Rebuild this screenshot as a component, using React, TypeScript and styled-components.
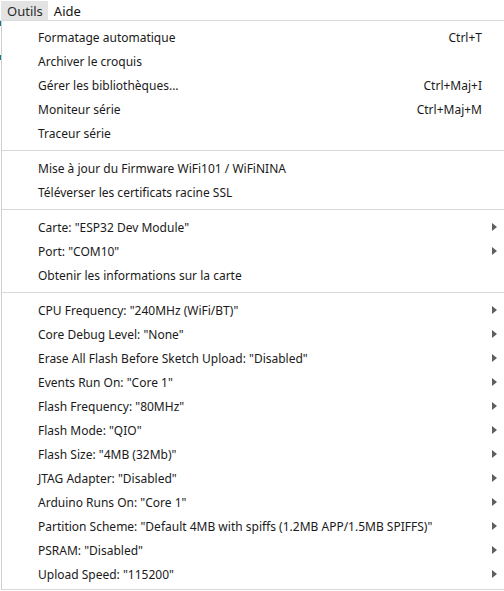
import styled, { createGlobalStyle } from "styled-components";

const GlobalStyle = createGlobalStyle`
  html, body {
    margin: 0;
    padding: 0;
    background: #ffffff;
  }
  body {
    font-family: "Noto Sans", "Open Sans", sans-serif;
    font-size: 12px;
    color: #1a1a1a;
    width: 504px;
    height: 591px;
    overflow: hidden;
  }
`;

const Page = styled.div`
  width: 504px;
  height: 591px;
  display: flex;
  flex-direction: column;
  background: linear-gradient(
    to bottom,
    #ffffff 0,
    #ffffff 21px,
    #0e7c86 21px,
    #0e7c86 26px,
    #ffffff 26px,
    #ffffff 55px,
    #0e7c86 55px,
    #0e7c86 60px,
    #ffffff 60px
  );
  background-size: 1px 100%;
  background-repeat: no-repeat;
`;

const MenuBar = styled.div`
  height: 20px;
  display: flex;
  align-items: stretch;
  padding-left: 1px;
  border-bottom: 1px solid #dcdcdc;
  background: #ffffff;
`;

const MenuTitle = styled.div<{ active?: boolean }>`
  display: flex;
  align-items: center;
  padding: 0 5px 0 6px;
  margin-top: 1px;
  font-size: 13px;
  color: ${(p) => (p.active ? "#2b2b2b" : "#111")};
  background: ${(p) => (p.active ? "#e3e3e3" : "transparent")};
`;

const Dropdown = styled.div`
  margin-left: 1px;
  flex: 1;
  display: flex;
  flex-direction: column;
  border-left: 1px solid #cfcfcf;
  border-bottom: 1px solid #d8d8d8;
  padding: 4px 0 3px;
  background: #ffffff;
  margin-bottom: 1px;
`;

const Item = styled.div`
  height: 24px;
  display: flex;
  align-items: center;
  padding-left: 36px;
  padding-right: 6px;
  white-space: nowrap;
`;

const Label = styled.span`
  flex: 1;
  color: #1a1a1a;
`;

const Shortcut = styled.span`
  color: #1a1a1a;
  margin-right: 16px;
`;

const Arrow = styled.span`
  width: 0;
  height: 0;
  border-top: 4px solid transparent;
  border-bottom: 4px solid transparent;
  border-left: 5px solid #5f5f5f;
  margin-right: 1px;
`;

const Separator = styled.div`
  height: 11px;
  display: flex;
  align-items: center;
  &::after {
    content: "";
    flex: 1;
    height: 1px;
    background: #dadada;
  }
`;

type Entry = { label: string; shortcut?: string; sub?: boolean } | "sep";

const entries: Entry[] = [
  { label: "Formatage automatique", shortcut: "Ctrl+T" },
  { label: "Archiver le croquis" },
  { label: "Gérer les bibliothèques...", shortcut: "Ctrl+Maj+I" },
  { label: "Moniteur série", shortcut: "Ctrl+Maj+M" },
  { label: "Traceur série" },
  "sep",
  { label: "Mise à jour du Firmware WiFi101 / WiFiNINA" },
  { label: "Téléverser les certificats racine SSL" },
  "sep",
  { label: 'Carte: "ESP32 Dev Module"', sub: true },
  { label: 'Port: "COM10"', sub: true },
  { label: "Obtenir les informations sur la carte" },
  "sep",
  { label: 'CPU Frequency: "240MHz (WiFi/BT)"', sub: true },
  { label: 'Core Debug Level: "None"', sub: true },
  { label: 'Erase All Flash Before Sketch Upload: "Disabled"', sub: true },
  { label: 'Events Run On: "Core 1"', sub: true },
  { label: 'Flash Frequency: "80MHz"', sub: true },
  { label: 'Flash Mode: "QIO"', sub: true },
  { label: 'Flash Size: "4MB (32Mb)"', sub: true },
  { label: 'JTAG Adapter: "Disabled"', sub: true },
  { label: 'Arduino Runs On: "Core 1"', sub: true },
  {
    label: 'Partition Scheme: "Default 4MB with spiffs (1.2MB APP/1.5MB SPIFFS)"',
    sub: true,
  },
  { label: 'PSRAM: "Disabled"', sub: true },
  { label: 'Upload Speed: "115200"', sub: true },
];

const App = () => {
  return (
    <>
      <GlobalStyle />
      <Page>
        <MenuBar>
          <MenuTitle active>Outils</MenuTitle>
          <MenuTitle>Aide</MenuTitle>
        </MenuBar>
        <Dropdown>
          {entries.map((e, i) =>
            e === "sep" ? (
              <Separator key={i} />
            ) : (
              <Item key={i}>
                <Label>{e.label}</Label>
                {e.shortcut && <Shortcut>{e.shortcut}</Shortcut>}
                {e.sub && <Arrow />}
              </Item>
            )
          )}
        </Dropdown>
      </Page>
    </>
  );
};

export default App;
